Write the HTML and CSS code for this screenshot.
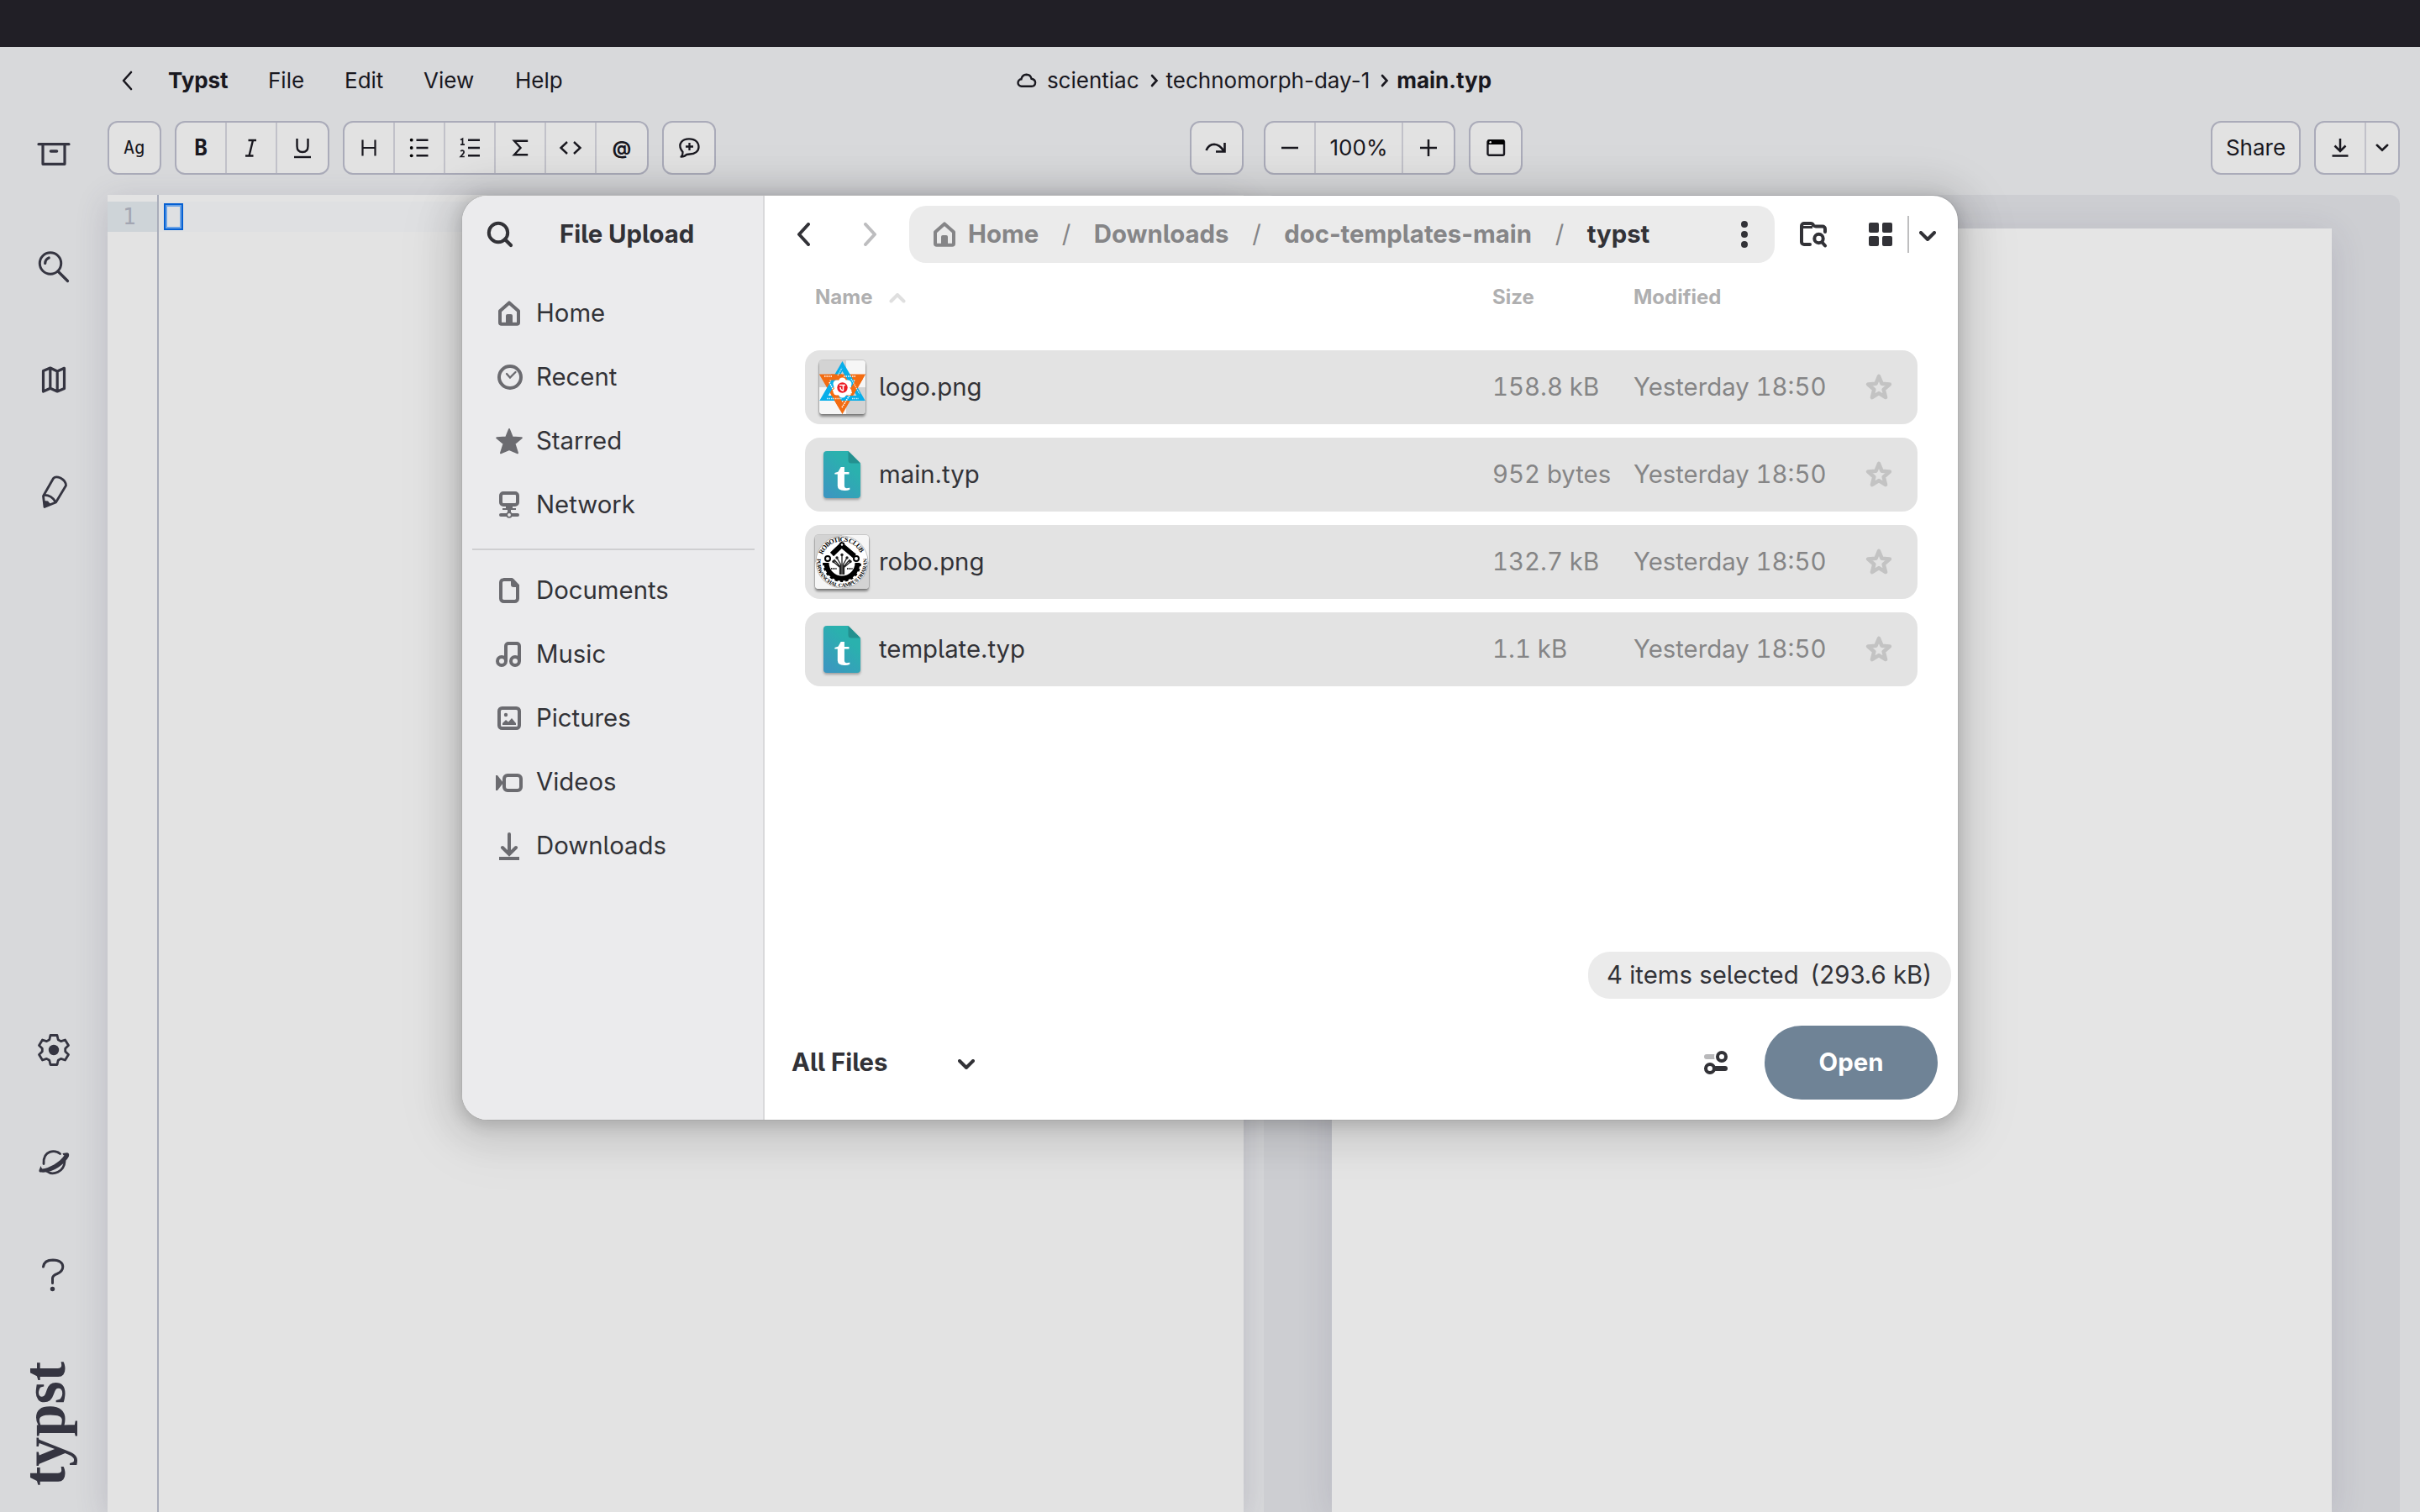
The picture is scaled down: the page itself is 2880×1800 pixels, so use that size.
FILE: index.html
```html
<!DOCTYPE html>
<html lang="en">
<head>
<meta charset="utf-8">
<title>Typst</title>
<link rel="stylesheet" href="styles.css">
</head>
<body>
<svg class="defs" width="0" height="0">
  <defs>
    <linearGradient id="teal" x1="0.9" y1="0" x2="0.2" y2="1"><stop offset="0.3" stop-color="#2ab1ae"/><stop offset="1" stop-color="#3b97c0"/></linearGradient>
    <symbol id="home" viewBox="0 0 32 32"><path d="M5 13.2 16 3.4l11 9.8V27a1.8 1.8 0 0 1-1.8 1.8H6.800A1.800 1.800 0 0 1 5 27z" fill="none" stroke="currentColor" stroke-width="4" stroke-linejoin="round"/><path d="M12 29V19a2 2 0 0 1 2-2h4a2 2 0 0 1 2 2v10z" fill="currentColor"/></symbol>
    <symbol id="down" viewBox="0 0 20 12"><path d="m2 2 8 8 8-8" fill="none" stroke="currentColor" stroke-width="4" stroke-linecap="round" stroke-linejoin="round"/></symbol>
    <symbol id="star" viewBox="0 0 32 32"><path d="m16 3 3.500 8.700 9.300.8-7.100 6.200 2.300 9.300L16 23.100l-8 4.900 2.300-9.300L3.200 12.500l9.300-.8z" fill="none" stroke="currentColor" stroke-width="4.600" stroke-linejoin="round"/></symbol>
    <symbol id="typfile" viewBox="0 0 44 56"><path d="M4 0h25.500L44 14.500V52a4 4 0 0 1-4 4H4a4 4 0 0 1-4-4V4a4 4 0 0 1 4-4z" fill="url(#teal)"/><path d="M29.500 0 44 14.500H33a3.500 3.500 0 0 1-3.500-3.500z" fill="#23908f"/><text x="12.500" y="47" textLength="19" lengthAdjust="spacingAndGlyphs" class="typ-letter">t</text></symbol>
  </defs>
</svg>

<div class="system-bar"></div>
<div class="app">
  <nav class="rail">
    <svg class="rail-icon" viewBox="0 0 40 40"><path d="M2 7.700h36M7 8v23.300h26V8" fill="none" stroke="currentColor" stroke-width="3.200" stroke-linecap="round" stroke-linejoin="round"/><path d="M16.500 16h7" stroke="currentColor" stroke-width="3.600" stroke-linecap="round"/></svg>
    <svg class="rail-icon" viewBox="0 0 40 40"><circle cx="16" cy="15.500" r="12.700" fill="none" stroke="currentColor" stroke-width="3"/><path d="m25 25 11.500 11.500M9.700 15.500q.3-5 4.500-6.500" fill="none" stroke="currentColor" stroke-width="3.200" stroke-linecap="round"/></svg>
    <svg class="rail-icon" viewBox="0 0 40 40"><path d="m7.500 9.500 8.300-3.500 8.400 4 8.300-3.700v24.200L24.200 34l-8.400-3.700-8.300 3.700zM15.800 6v24.300M24.200 10v24" fill="none" stroke="currentColor" stroke-width="3.200" stroke-linejoin="round"/></svg>
    <svg class="rail-icon" viewBox="0 0 40 40"><path d="M19.500 3.500q2.500-3 8.500-.5 6.500 3.500 6.500 9L22.500 32 9 37.500 7.500 24.500z" fill="none" stroke="currentColor" stroke-width="2.800" stroke-linejoin="round"/><path d="M8 23.500q9-.5 14 8" fill="none" stroke="currentColor" stroke-width="2.800"/><path d="m8 30 5 .5 3.500 4L9 38z" fill="currentColor"/></svg>
    <span class="rail-space"></span>
    <svg class="rail-icon" viewBox="0 0 40 40"><path d="M16 2.500h8l1.200 5.200 3.300 1.900 5-1.600 4 6.500-3.800 3.700v3.600l3.800 3.700-4 6.500-5-1.600-3.300 1.900L24 37.500h-8l-1.200-5.200-3.300-1.900-5 1.600-4-6.500 3.800-3.700v-3.600l-3.800-3.700 4-6.500 5 1.600 3.300-1.900z" fill="none" stroke="currentColor" stroke-width="2.800" stroke-linejoin="round"/><circle cx="20" cy="20" r="6.200" fill="currentColor"/></svg>
    <svg class="rail-icon" viewBox="0 0 40 40"><path d="M8 21.500C7 5 22 4.500 27.500 9.500M33 18.500C32.500 31 19 36 12 30.500" fill="none" stroke="currentColor" stroke-width="2.800" stroke-linecap="round"/><path d="m4.500 24-2 5q-.5 2.500 2 2.600C19 33 33 22 38 12.500q.8-4-2-4.300L30.500 9q.5 2.500 2 2.600C27 20 14 27 6.500 27.500q-1.500-1-2-3.500z" fill="currentColor"/></svg>
    <svg class="rail-icon" viewBox="0 0 40 40"><path d="M7.500 10q1-8 11.500-8 11.500.5 11.800 8 0 5.500-7 8.500-5 2-5.300 5v6" fill="none" stroke="currentColor" stroke-width="3" stroke-linecap="round"/><circle cx="18.500" cy="36.500" r="2.700" fill="currentColor"/></svg>
    <svg class="brand" viewBox="0 0 128 160"><text transform="translate(76.500 152) rotate(-90)" textLength="148" lengthAdjust="spacingAndGlyphs">typst</text></svg>
  </nav>

  <main class="workspace">
    <header class="menubar">
      <div class="menus">
        <svg class="back" viewBox="0 0 14 24"><path d="M12 2 3 12l9 10" fill="none" stroke="currentColor" stroke-width="2.600" stroke-linecap="round" stroke-linejoin="round"/></svg>
        <b class="m-typst">Typst</b><span class="m-file">File</span><span class="m-edit">Edit</span><span class="m-view">View</span><span>Help</span>
      </div>
      <div class="crumbs">
        <svg class="cloud" viewBox="0 0 24 18"><path d="M6 15.700a4.200 4.200 0 0 1-.6-8.400Q6.500 2 11.500 1.800q5 .2 6 5 4.600.7 4.600 4.700-.3 4.200-4.300 4.200z" fill="none" stroke="currentColor" stroke-width="2.400"/></svg>
        <span class="c-owner">scientiac</span>
        <svg class="sep" viewBox="0 0 10 16"><path d="m2 2 5.500 6L2 14" fill="none" stroke="currentColor" stroke-width="2.600" stroke-linecap="round"/></svg>
        <span class="c-project">technomorph-day-1</span>
        <svg class="sep" viewBox="0 0 10 16"><path d="m2 2 5.500 6L2 14" fill="none" stroke="currentColor" stroke-width="2.600" stroke-linecap="round"/></svg>
        <b>main.typ</b>
      </div>
    </header>

    <div class="toolbar">
      <div class="tools">
        <div class="group"><span class="cell mono ag">Ag</span></div>
        <div class="group">
          <span class="cell mono bold">B</span>
          <span class="cell"><svg class="ico" viewBox="0 0 28 28"><path d="M10.500 5H20M7 23.500h9.500M16 5l-4.500 18.500" fill="none" stroke="currentColor" stroke-width="2.400"/></svg></span>
          <span class="cell"><svg class="ico" viewBox="0 0 28 28"><path d="M7.500 3v9q0 7 6.500 7t6.500-7V3" fill="none" stroke="currentColor" stroke-width="2.400"/><path d="M4 25h20" stroke="currentColor" stroke-width="2.400"/></svg></span>
        </div>
        <div class="group">
          <span class="cell"><svg class="ico" viewBox="0 0 28 28"><path d="M6.500 4.500v19M21.500 4.500v19M6.500 14h15" stroke="currentColor" stroke-width="2.200"/></svg></span>
          <span class="cell"><svg class="ico" viewBox="0 0 28 28"><path d="M10.500 4.700h14M10.500 14h14M10.500 23.300h14" stroke="currentColor" stroke-width="2.500"/><circle cx="4.700" cy="4.700" r="1.900"/><circle cx="4.700" cy="14" r="1.900"/><circle cx="4.700" cy="23.300" r="1.900"/></svg></span>
          <span class="cell"><svg class="ico" viewBox="0 0 28 28"><path d="M12 4.700h14M12 14h14M12 23.300h14" stroke="currentColor" stroke-width="2.500"/><path d="m3 4.500 2.500-1.300v7M3 10.200h5M3.200 18q2-1.800 3.800 0 .6 1.500-1 3.200L3.200 24.500h4.600" fill="none" stroke="currentColor" stroke-width="1.700"/></svg></span>
          <span class="cell"><svg class="ico" viewBox="0 0 28 28"><path d="M22 7V5.700H7l7.500 8.300L7 22.300h15V21" fill="none" stroke="currentColor" stroke-width="2.400"/></svg></span>
          <span class="cell"><svg class="ico" viewBox="0 0 28 28"><path d="m10 7-7.500 7 7.500 7M18 7l7.500 7-7.500 7" fill="none" stroke="currentColor" stroke-width="2.400"/></svg></span>
          <span class="cell at">@</span>
        </div>
        <div class="group"><span class="cell"><svg class="ico" viewBox="0 0 28 28"><path d="M4.500 16C1 9 6 3.300 14 3.300S25.500 8 25.500 13 21 21.500 15 21.500L11 22q-2 2.500-6.500 2.700Q7 22 6.500 19z" fill="none" stroke="currentColor" stroke-width="2.300" stroke-linejoin="round"/><path d="M14.500 8v9M10 12.500h9" stroke="currentColor" stroke-width="2.300"/></svg></span></div>
      </div>
      <div class="tools view-tools">
        <div class="group"><span class="cell"><svg class="ico" viewBox="1.500 0 28 28"><path d="M3 17q3-7 9.500-7.200Q19 10 24 18" fill="none" stroke="currentColor" stroke-width="2.600"/><path d="M25 8v10.500H14.500" fill="none" stroke="currentColor" stroke-width="2.600"/></svg></span></div>
        <div class="group zoom">
          <span class="cell"><svg class="ico" viewBox="0 0 28 28"><path d="M4 14h20" stroke="currentColor" stroke-width="2.500"/></svg></span>
          <span class="cell percent">100%</span>
          <span class="cell"><svg class="ico" viewBox="0 0 28 28"><path d="M4 14h20M14 4v20" stroke="currentColor" stroke-width="2.500"/></svg></span>
        </div>
        <div class="group"><span class="cell"><svg class="ico" viewBox="0 0 28 28"><rect x="4.500" y="5.200" width="19.500" height="17.600" rx="1.800" fill="none" stroke="currentColor" stroke-width="2.400"/><path d="M4.500 4.500h19.500v5.500H4.500z"/><circle cx="7.700" cy="7.300" r="1.300" fill="#e2e2e2"/></svg></span></div>
      </div>
      <div class="tools share-tools">
        <div class="group share"><span class="cell">Share</span></div>
        <div class="group save">
          <span class="cell"><svg class="ico" viewBox="0 0 28 28"><path d="M14 3v14M7.500 11.500 14 18l6.500-6.500" fill="none" stroke="currentColor" stroke-width="2.500"/><path d="M4.500 23.500h19" stroke="currentColor" stroke-width="2.500"/></svg></span>
          <span class="cell"><svg class="caret" viewBox="0 0 16 10"><path d="m1.800 1.800 6.200 6 6.200-6" fill="none" stroke="currentColor" stroke-width="2.600" stroke-linecap="round"/></svg></span>
        </div>
      </div>
    </div>

    <div class="panes">
      <section class="editor">
        <div class="gutter"><div class="line-no">1</div></div>
        <div class="code"><div class="line"><span class="cursor"></span></div></div>
      </section>
      <section class="preview"><div class="page"></div></section>
    </div>
  </main>
</div>

<div class="dialog">
  <aside class="places">
    <div class="places-head">
      <svg class="find" viewBox="0 0 32 32"><circle cx="14" cy="14" r="11.200" fill="none" stroke="currentColor" stroke-width="4"/><path d="m22 22 7 7" stroke="currentColor" stroke-width="4.200" stroke-linecap="round"/></svg>
      <b>File Upload</b>
    </div>
    <ul class="place-list">
      <li><svg class="pi"><use href="#home"/></svg>Home</li>
      <li><svg class="pi" viewBox="0 0 32 32"><circle cx="17" cy="16" r="13" fill="none" stroke="currentColor" stroke-width="4"/><path d="m13 12 4 4.500 6.500-6.500" fill="none" stroke="currentColor" stroke-width="2.300" stroke-linecap="round"/></svg>Recent</li>
      <li><svg class="pi" viewBox="0 0 32 32"><path d="m16 2 3.800 9.500 11 .8-8.300 7 3.500 11L16 26 6 30.300l3.500-11-8.300-7 11-.8z" fill="currentColor" stroke="currentColor" stroke-width="2" stroke-linejoin="round"/></svg>Starred</li>
      <li><svg class="pi" viewBox="0 0 32 32"><rect x="6" y="2" width="20" height="14" rx="3" fill="none" stroke="currentColor" stroke-width="4"/><path d="M12 17h8v3h4v2h-6v3h-4v-3H8v-2h4zM6 26h20a2 2 0 0 1 0 4H6a2 2 0 0 1 0-4z" fill="currentColor"/><circle cx="16" cy="28" r="2.800" fill="#ebebed" stroke="currentColor" stroke-width="1.800"/></svg>Network</li>
      <li class="rule"></li>
      <li><svg class="pi" viewBox="0 0 32 32"><path d="M9 3h10l7 7v15.500a3.500 3.500 0 0 1-3.500 3.500h-13A3.500 3.500 0 0 1 6 25.500V6.500A3.500 3.500 0 0 1 9.500 3z" fill="none" stroke="currentColor" stroke-width="4"/><path d="M18 2h3l7 8v2h-7a3 3 0 0 1-3-3z" fill="currentColor"/></svg>Documents</li>
      <li><svg class="pi" viewBox="0 0 32 32"><path d="M12 24V6a3 3 0 0 1 3-3h10a3 3 0 0 1 3 3v18" fill="none" stroke="currentColor" stroke-width="4"/><circle cx="7" cy="24" r="5" fill="none" stroke="currentColor" stroke-width="4"/><circle cx="23" cy="24" r="5" fill="none" stroke="currentColor" stroke-width="4"/></svg>Music</li>
      <li><svg class="pi" viewBox="0 0 32 32"><rect x="4" y="4" width="24" height="24" rx="3.500" fill="none" stroke="currentColor" stroke-width="4"/><path d="M8 24v-2l4-4 3 2.500L19 16l5 6v2z" fill="currentColor"/><circle cx="12" cy="12" r="2.200" fill="currentColor"/></svg>Pictures</li>
      <li><svg class="pi" viewBox="0 0 32 32"><rect x="10" y="8" width="20" height="18" rx="4" fill="none" stroke="currentColor" stroke-width="4"/><path d="M0 8h2l7 9-7 9H0z" fill="currentColor"/></svg>Videos</li>
      <li><svg class="pi" viewBox="0 0 32 32"><path d="M16 2v23M8 18l8 8 8-8" fill="none" stroke="currentColor" stroke-width="4" stroke-linecap="round"/><path d="M4 31h24" stroke="currentColor" stroke-width="4"/></svg>Downloads</li>
    </ul>
  </aside>

  <section class="browser">
    <header class="nav">
      <svg class="step" viewBox="0 0 16 28"><path d="M14 2 3 14l11 12" fill="none" stroke="currentColor" stroke-width="4" stroke-linecap="round" stroke-linejoin="round"/></svg>
      <svg class="step off" viewBox="0 0 16 28"><path d="m2 2 11 12L2 26" fill="none" stroke="currentColor" stroke-width="4" stroke-linecap="round" stroke-linejoin="round"/></svg>
      <div class="pathbar">
        <svg class="pi"><use href="#home"/></svg>
        <b class="first">Home</b><i>/</i><b>Downloads</b><i>/</i><b>doc-templates-main</b><i>/</i><b class="here">typst</b>
        <svg class="dots" viewBox="0 0 8 32"><circle cx="4" cy="4" r="4"/><circle cx="4" cy="16" r="4"/><circle cx="4" cy="28" r="4"/></svg>
      </div>
      <svg class="folder" viewBox="0 0 34 32"><path d="M13 28H6a3 3 0 0 1-3-3V6a3 3 0 0 1 3-3h8q2 0 3 2 1 1.500 3 1.500h8a3 3 0 0 1 3 3V13" fill="none" stroke="currentColor" stroke-width="4" stroke-linecap="round"/><path d="M3 7.500h13" stroke="currentColor" stroke-width="3"/><circle cx="23.500" cy="21" r="5.200" fill="none" stroke="currentColor" stroke-width="4"/><path d="m27.500 25.500 3.500 4" stroke="currentColor" stroke-width="4" stroke-linecap="round"/></svg>
      <svg class="grid-icon" viewBox="0 0 28 28"><rect width="12" height="12" rx="2"/><rect x="16" width="12" height="12" rx="2"/><rect y="16" width="12" height="12" rx="2"/><rect x="16" y="16" width="12" height="12" rx="2"/></svg>
      <span class="bar"></span>
      <svg class="chev"><use href="#down"/></svg>
    </header>

    <div class="columns">
      <b class="col-name">Name <svg class="sort" viewBox="0 0 20 12"><path d="m2.500 9.500 7.500-7.500 7.500 7.500" fill="none" stroke="#dfdfdf" stroke-width="4" stroke-linecap="round" stroke-linejoin="round"/></svg></b>
      <b>Size</b><b>Modified</b>
    </div>

    <div class="files">
      <div class="file">
        <span class="thumb"><svg class="picture" width="55" height="64" viewBox="0 0 55 64"><path d="M0 0h32v32H0zM32 32h23v32H32z" fill="#d3d3d3"/><path d="M32 0h23v32H32zM0 32h32v32H0z" fill="#f6f6f6"/><path d="M6 20h43L27.500 57z" fill="none" stroke="#f36c12" stroke-width="7"/><path d="M27.500 7 49.500 45H5.500z" fill="none" stroke="#08aeea" stroke-width="6"/><path d="M14 20h13M49 20 38 39M27.500 57 16.500 38" stroke="#f36c12" stroke-width="7"/><path d="M6 19h10M29 19h15M12 26l6 12M27 56l12-19" stroke="#fff" stroke-width="1.600" stroke-dasharray="1.500 1"/><path d="M9 45.500h18M39 45.500h8M38 22l10 18M22 18l5-9" stroke="#fff" stroke-width="1.300" stroke-dasharray="1.500 1" opacity=".8"/><g fill="#fff"><circle cx="27.500" cy="25" r="4.500"/><circle cx="34" cy="28" r="4.500"/><circle cx="34" cy="37" r="4.500"/><circle cx="27.500" cy="40" r="4.500"/><circle cx="21" cy="37" r="4.500"/><circle cx="21" cy="28" r="4.500"/><circle cx="27.500" cy="32.500" r="8"/></g><circle cx="27.500" cy="32.500" r="6.200" fill="#ed1c24"/><path d="M24 29.500h7M28.500 30v5.500M25 32q0 4 4 4" fill="none" stroke="#fff" stroke-width="1.600"/></svg></span>
        <span>logo.png</span><span class="meta">158.8 kB</span><span class="meta">Yesterday 18:50</span><svg class="fav"><use href="#star"/></svg>
      </div>
      <div class="file">
        <span class="thumb"><svg class="doc" width="44" height="56"><use href="#typfile"/></svg></span>
        <span>main.typ</span><span class="meta">952 bytes</span><span class="meta">Yesterday 18:50</span><svg class="fav"><use href="#star"/></svg>
      </div>
      <div class="file">
        <span class="thumb"><svg class="picture" width="64" height="64" viewBox="0 0 64 64"><path d="M0 0h32v32H0zM32 32h32v32H32z" fill="#d3d3d3"/><path d="M32 0h32v32H32zM0 32h32v32H0z" fill="#f6f6f6"/><circle cx="32" cy="32" r="31" fill="#fff" stroke="#888" stroke-width=".5"/><path id="arcTop" d="M9 23.500A24.500 24.500 0 0 1 55 23.500" fill="none"/><path id="arcBottom" d="M2.500 28A29.800 29.800 0 1 0 61.500 28" fill="none"/><text class="seal"><textPath href="#arcTop" textLength="57">ROBOTICS CLUB</textPath></text><text class="seal small"><textPath href="#arcBottom" textLength="102">PURWANCHAL CAMPUS DHARAN</textPath></text><path d="M13.500 33a18.500 18.500 0 0 0 37 0" fill="none" stroke="#000" stroke-width="6"/><path d="M10.800 33a21.200 21.200 0 0 0 42.400 0" fill="none" stroke="#000" stroke-width="3.500" stroke-dasharray="3.200 3"/><path d="M20 23 31.500 12 47 25" fill="none" stroke="#000" stroke-width="6"/><circle cx="32" cy="11.500" r="2.300" fill="#fff" stroke="#000" stroke-width="2"/><circle cx="49" cy="28" r="3" fill="#fff" stroke="#000" stroke-width="2"/><circle cx="15" cy="28" r="3" fill="#fff" stroke="#000" stroke-width="2"/><path d="M29.500 47V37l-7-8M32 47V24M34.500 47V37l7-8M30.500 47V35l-4-7M33.500 47V35l4-7M29 38l-7-6M35 38l7-6" fill="none" stroke="#222" stroke-width="1.300"/><g fill="#222"><circle cx="32" cy="23.500" r="1.700"/><circle cx="26" cy="27" r="1.700"/><circle cx="38" cy="27" r="1.700"/><circle cx="22" cy="31.500" r="1.700"/><circle cx="42" cy="31.500" r="1.700"/></g><path d="M19 40h7M38 40h7" stroke="#333" stroke-width="2" stroke-dasharray="1.200 .6"/></svg></span>
        <span>robo.png</span><span class="meta">132.7 kB</span><span class="meta">Yesterday 18:50</span><svg class="fav"><use href="#star"/></svg>
      </div>
      <div class="file">
        <span class="thumb"><svg class="doc" width="44" height="56"><use href="#typfile"/></svg></span>
        <span>template.typ</span><span class="meta">1.1 kB</span><span class="meta">Yesterday 18:50</span><svg class="fav"><use href="#star"/></svg>
      </div>
    </div>

    <div class="status"><span>4 items selected</span><span>(293.6 kB)</span></div>
    <footer class="actions">
      <b class="filter">All Files</b>
      <svg class="chev"><use href="#down"/></svg>
      <svg class="options" viewBox="0 0 28 28"><path d="M3 7h9" stroke="#b9b9bb" stroke-width="6" stroke-linecap="round"/><circle cx="21" cy="7" r="9" fill="#fff"/><circle cx="21" cy="7" r="5" fill="none" stroke="currentColor" stroke-width="4"/><circle cx="7" cy="21" r="5" fill="none" stroke="currentColor" stroke-width="4"/><path d="M14 21h11" stroke="currentColor" stroke-width="6" stroke-linecap="round"/></svg>
      <span class="open">Open</span>
    </footer>
  </section>
</div>
</body>
</html>
```
FILE: styles.css
```css
* { box-sizing: border-box; }
body {
  margin: 0;
  width: 2880px;
  height: 1800px;
  overflow: hidden;
  display: flex;
  flex-direction: column;
  background: #d8d9db;
  color: #19181f;
  font: 26px/1 Inter, "Liberation Sans", sans-serif;
}
svg { display: block; flex: none; }
.defs { position: absolute; }
.system-bar { height: 56px; flex: none; background: #211f26; }
.app { flex: 1; min-height: 0; display: flex; }

/* icon rail */
.rail {
  width: 128px;
  padding: 108px 0 23px;
  display: flex;
  flex-direction: column;
  align-items: center;
  gap: 94px;
  color: #353541;
}
.rail-icon { width: 40px; height: 40px; overflow: visible; }
.rail-space { flex: 1; margin-top: -94px; }
.brand { width: 128px; height: 160px; margin-top: -15px; }
.brand text { font: bold 71px "Liberation Serif", serif; fill: #353541; }

.workspace { flex: 1; min-width: 0; display: flex; flex-direction: column; }

/* menus */
.menubar { height: 88px; padding: 0 23px 8px 0; display: grid; grid-template-columns: 1fr auto 1fr; align-items: center; }
.menus, .crumbs { display: flex; align-items: center; }
.menus { padding-left: 16px; }
.menus > * { line-height: 32px; }
.back { width: 14px; height: 24px; margin-right: 42px; }
.m-typst { width: 119px; letter-spacing: -.1px; }
.m-file { width: 91px; }
.m-edit { width: 94px; }
.m-view { width: 109px; }
.menus b, .crumbs b { font-weight: 700; }
.cloud { width: 24px; height: 18px; margin-right: 12px; }
.sep { width: 10px; height: 16px; margin: 0 9px 0 13px; }

/* toolbar */
.toolbar { height: 64px; display: flex; padding-right: 24px; }
.tools { display: flex; gap: 16px; }
.tools:first-child { width: 1288px; }
.view-tools .zoom { margin-left: 8px; }
.share-tools { margin-left: auto; }
.group { display: flex; height: 64px; border: 2px solid #aaabb9; border-radius: 12px; background: #e2e2e2; }
.cell { width: 60px; display: flex; align-items: center; justify-content: center; }
.cell:not(:last-child) { border-right: 2px solid #c1c1c9; }
.ico { width: 28px; height: 28px; }
.mono { font-family: "DejaVu Sans Mono", "Liberation Mono", monospace; }
.ag { font-size: 21px; }
.bold { font-weight: bold; font-size: 26px; }
.at { font-size: 22px; font-weight: 700; }
.percent { width: 104px; }
.share .cell { width: 103px; }
.save .cell:last-child { width: 38px; }
.caret { width: 16px; height: 10px; }

/* panes */
.panes { margin-top: 24px; flex: 1; display: flex; gap: 24px; padding-right: 24px; }
.editor { width: 1352px; display: flex; background: #e3e3e3; box-shadow: 0 8px 36px rgba(70, 66, 100, .2); }
.gutter { width: 61px; border-right: 2px solid #a9adba; padding-top: 8px; }
.line-no { height: 36px; background: #ced4d8; color: #a3a6b2; font: 26px/36px "DejaVu Sans Mono", monospace; padding-left: 18px; }
.code { flex: 1; padding-top: 8px; }
.line { height: 36px; background: #dfe0e2; padding: 2px 0 0 6px; }
.cursor { display: block; width: 23px; height: 32px; border: 2px solid #0660d2; box-shadow: inset 0 0 0 2px #6ba3e6; }
.preview { flex: 1; background: #cdced2; border-radius: 12px 12px 0 0; padding: 40px 81px 0; overflow: hidden; position: relative; }
.page { height: 100%; background: #e5e5e5; box-shadow: 0 8px 40px rgba(60, 52, 90, .14); }

/* upload dialog */
.dialog {
  position: absolute;
  left: 550px;
  top: 233px;
  width: 1780px;
  height: 1100px;
  border-radius: 30px;
  overflow: hidden;
  display: flex;
  background: #fff;
  color: #323237;
  font-size: 29.330px;
  font-feature-settings: "cv05";
  box-shadow: 0 4px 16px 4px rgba(0, 0, 0, .13), 0 6px 40px 20px rgba(0, 0, 0, .09), 0 12px 64px 32px rgba(0, 0, 0, .04), 0 0 0 1px rgba(0, 0, 0, .05);
}
.dialog b { font-weight: 700; }
.pi { width: 32px; height: 32px; overflow: visible; color: #6b6b70; }
.places { width: 360px; flex: none; background: #ebebed; border-right: 2px solid #d9d9db; }
.places-head { height: 92px; padding-left: 29px; display: flex; align-items: center; gap: 55px; }
.find { width: 32px; height: 32px; }
.place-list { list-style: none; margin: 10px 0 0; padding: 0; }
.place-list li { height: 76px; padding-left: 40px; display: flex; align-items: center; gap: 16px; }
.place-list .rule { height: 2px; margin: 14px 10px 10px 12px; padding: 0; background: #cfcfd1; }

.browser { position: relative; flex: 1; min-width: 0; display: flex; flex-direction: column; }
.nav { height: 92px; padding: 0 26px 0 38px; display: flex; align-items: center; }
.step { width: 16px; height: 28px; margin-right: 64px; }
.step.off { color: #bdbdbf; margin-right: 38px; }
.pathbar { width: 1030px; flex: none; height: 68px; padding: 0 32px 0 26px; border-radius: 20px; background: #ebebeb; color: #858587; display: flex; align-items: center; }
.pathbar .pi { color: inherit; }
.pathbar .first { margin-left: 12px; }
.pathbar i { font-style: normal; width: 9px; margin: 0 29px 0 27.700px; }
.pathbar .here { color: #323237; }
.dots { width: 8px; height: 32px; margin-left: auto; fill: #323237; }
.folder { width: 34px; height: 32px; margin-left: 29px; }
.grid-icon { width: 28px; height: 28px; margin-left: 49px; fill: #323237; }
.bar { width: 2px; height: 44px; margin: 0 12px 0 18px; background: #bebebf; }
.chev { width: 20px; height: 12px; margin-top: 3px; }

.columns, .file { display: grid; align-items: center; }
.columns { height: 56px; padding: 1px 0 0 60px; grid-template-columns: 806px 168px auto; justify-content: start; font-size: 24px; color: #afafb0; }
.col-name { display: flex; align-items: center; }
.sort { width: 20px; height: 12px; margin: 3px 0 0 20px; }
.files { padding: 36px 48px 0; display: flex; flex-direction: column; gap: 16px; }
.file { height: 88px; border-radius: 18px; background: #e3e3e3; grid-template-columns: 88px 730px 168px 276px auto; justify-content: start; }
.file .meta { color: #858586; white-space: nowrap; font-feature-settings: "cv05", "tnum"; }
.thumb { display: flex; justify-content: center; }
.picture { border-radius: 4px; box-shadow: 0 3px 3px rgba(0, 0, 0, .4), 0 0 0 1px rgba(0, 0, 0, .12); }
.doc { overflow: visible; filter: drop-shadow(0 2px 1.500px rgba(0, 0, 0, .3)); }
.typ-letter { font: bold 48px "Liberation Serif", serif; fill: #fff; }
.seal { font: bold 8px "Liberation Serif", serif; }
.seal.small { font-size: 6.500px; }
.fav { width: 32px; height: 32px; color: #c3c3c3; }

.status { position: absolute; right: 8px; bottom: 144px; width: 432px; height: 56px; border-radius: 26px; background: #ebebeb; display: flex; align-items: center; justify-content: center; gap: 14px; padding-right: 1px; white-space: nowrap; }
.actions { margin-top: auto; height: 112px; padding: 0 24px 24px 32px; display: flex; align-items: center; }
.filter { width: 198px; }
.options { width: 28px; height: 28px; margin-left: auto; margin-right: 44px; }
.open { width: 206px; height: 88px; border-radius: 44px; background: #6f8396; color: #fff; font-weight: 700; display: flex; align-items: center; justify-content: center; }
```
